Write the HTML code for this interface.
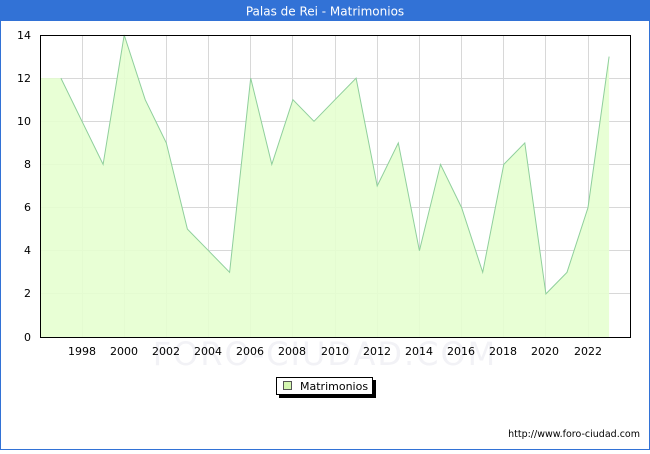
<!DOCTYPE html>
<html><head><meta charset="utf-8"><style>
body{margin:0;width:650px;height:450px;overflow:hidden;background:#fff;font-family:"DejaVu Sans",sans-serif}
</style></head><body>
<svg width="650" height="450" xmlns="http://www.w3.org/2000/svg" font-family="DejaVu Sans, sans-serif">
<rect x="0.5" y="0.5" width="649" height="449" fill="#fff" stroke="#3272d6"/>
<rect x="0" y="0" width="650" height="21" fill="#3272d6"/>
<text x="325" y="15.5" fill="#fff" font-size="12" text-anchor="middle">Palas de Rei - Matrimonios</text>
<g stroke="#d8d8d8" stroke-width="1">
<line x1="40" y1="78.5" x2="630" y2="78.5"/><line x1="40" y1="121.5" x2="630" y2="121.5"/><line x1="40" y1="164.5" x2="630" y2="164.5"/><line x1="40" y1="207.5" x2="630" y2="207.5"/><line x1="40" y1="250.5" x2="630" y2="250.5"/><line x1="40" y1="293.5" x2="630" y2="293.5"/>
<line x1="82.5" y1="35" x2="82.5" y2="337"/><line x1="124.5" y1="35" x2="124.5" y2="337"/><line x1="166.5" y1="35" x2="166.5" y2="337"/><line x1="208.5" y1="35" x2="208.5" y2="337"/><line x1="250.5" y1="35" x2="250.5" y2="337"/><line x1="292.5" y1="35" x2="292.5" y2="337"/><line x1="335.5" y1="35" x2="335.5" y2="337"/><line x1="377.5" y1="35" x2="377.5" y2="337"/><line x1="419.5" y1="35" x2="419.5" y2="337"/><line x1="461.5" y1="35" x2="461.5" y2="337"/><line x1="503.5" y1="35" x2="503.5" y2="337"/><line x1="545.5" y1="35" x2="545.5" y2="337"/><line x1="588.5" y1="35" x2="588.5" y2="337"/>
</g>
<text x="325" y="365" font-size="32" fill="#f2f2f6" text-anchor="middle" letter-spacing="2">FORO-CIUDAD.COM</text>
<polygon fill="#e6ffd0" fill-opacity="0.9" points="40,78.1 60.9,78.1 82,121.3 103.1,164.4 124.2,35 145.2,99.7 166.3,142.9 187.4,229.1 208.5,250.7 229.6,272.3 250.7,78.1 271.8,164.4 292.9,99.7 314,121.3 335,99.7 356.1,78.1 377.2,186 398.3,142.9 419.4,250.7 440.5,164.4 461.6,207.6 482.7,272.3 503.8,164.4 524.8,142.9 545.9,293.9 567,272.3 588,207.6 609.1,56.6 609.1,337 40,337"/>
<polyline fill="none" stroke="#8fcf9c" stroke-width="1" points="60.9,78.1 82,121.3 103.1,164.4 124.2,35 145.2,99.7 166.3,142.9 187.4,229.1 208.5,250.7 229.6,272.3 250.7,78.1 271.8,164.4 292.9,99.7 314,121.3 335,99.7 356.1,78.1 377.2,186 398.3,142.9 419.4,250.7 440.5,164.4 461.6,207.6 482.7,272.3 503.8,164.4 524.8,142.9 545.9,293.9 567,272.3 588,207.6 609.1,56.6"/>
<rect x="40.5" y="35.5" width="590" height="302" fill="none" stroke="#000"/>
<g font-size="11" fill="#000" text-anchor="end">
<text x="31" y="39">14</text><text x="31" y="82">12</text><text x="31" y="125">10</text><text x="31" y="168">8</text><text x="31" y="211">6</text><text x="31" y="254">4</text><text x="31" y="297">2</text><text x="31" y="341">0</text>
</g>
<g font-size="11" fill="#000" text-anchor="middle">
<text x="82" y="355">1998</text><text x="124" y="355">2000</text><text x="166" y="355">2002</text><text x="208" y="355">2004</text><text x="250" y="355">2006</text><text x="292" y="355">2008</text><text x="335" y="355">2010</text><text x="377" y="355">2012</text><text x="419" y="355">2014</text><text x="461" y="355">2016</text><text x="503" y="355">2018</text><text x="545" y="355">2020</text><text x="588" y="355">2022</text>
</g>
<rect x="279" y="380" width="97" height="18" fill="#000"/>
<rect x="276.5" y="377.5" width="96" height="17" fill="#fff" stroke="#000"/>
<rect x="283.5" y="381.5" width="8" height="8" fill="#d4f7b0" stroke="#555"/>
<text x="300" y="390" font-size="11" fill="#000">Matrimonios</text>
<text x="640" y="437" font-size="9.5" fill="#000" text-anchor="end">http://www.foro-ciudad.com</text>
</svg>
</body></html>
